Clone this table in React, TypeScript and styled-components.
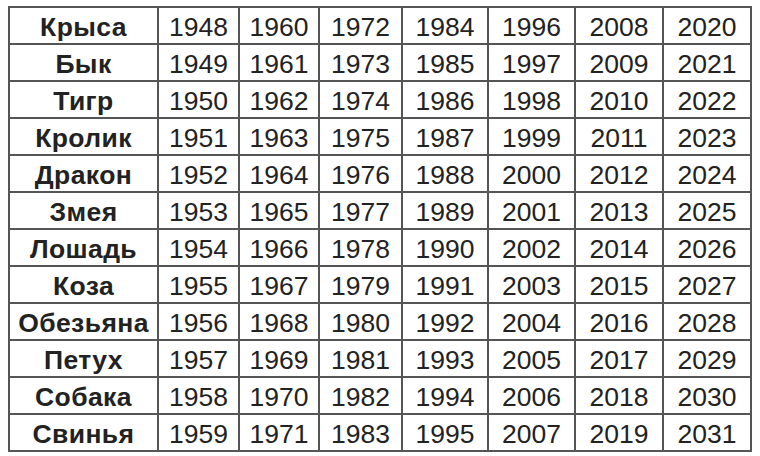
import React from 'react'
import styled, { createGlobalStyle } from 'styled-components'

// DATA
const animals = ['Крыса', 'Бык', 'Тигр', 'Кролик', 'Дракон', 'Змея', 'Лошадь', 'Коза', 'Обезьяна', 'Петух', 'Собака', 'Свинья']
const colWidths = [149, 81, 80, 83, 86, 87, 88, 88]

const GlobalStyle = createGlobalStyle`
  html, body { margin: 0; padding: 0; background: #ffffff; }
  body { font-family: "Liberation Sans", Arial, sans-serif; }
`

const Page = styled.div`padding: 6px 0 0 8px;`

const Table = styled.table`
  border-collapse: collapse;
  table-layout: fixed;
  width: 742px;
  border: 2px solid #555555;
`

const Cell = styled.td<{ $name?: boolean }>`
  border: 2px solid #555555;
  height: 37px;
  padding: 3px 0 0 0;
  box-sizing: border-box;
  text-align: center;
  vertical-align: middle;
  font-size: 26.5px;
  line-height: 30px;
  color: #222222;
  font-weight: ${p => (p.$name ? 700 : 400)};
  letter-spacing: ${p => (p.$name ? '0.4px' : '0')};
  white-space: nowrap;
`

export default function App() {
  return (
    <>
      <GlobalStyle />
      <Page>
        <Table>
          <colgroup>
            {colWidths.map((w, i) => <col key={i} style={{ width: w }} />)}
          </colgroup>
          <tbody>
            {animals.map((a, r) => (
              <tr key={a}>
                <Cell $name>{a}</Cell>
                {Array.from({ length: 7 }, (_, c) => (
                  <Cell key={c}>{1948 + r + c * 12}</Cell>
                ))}
              </tr>
            ))}
          </tbody>
        </Table>
      </Page>
    </>
  )
}
